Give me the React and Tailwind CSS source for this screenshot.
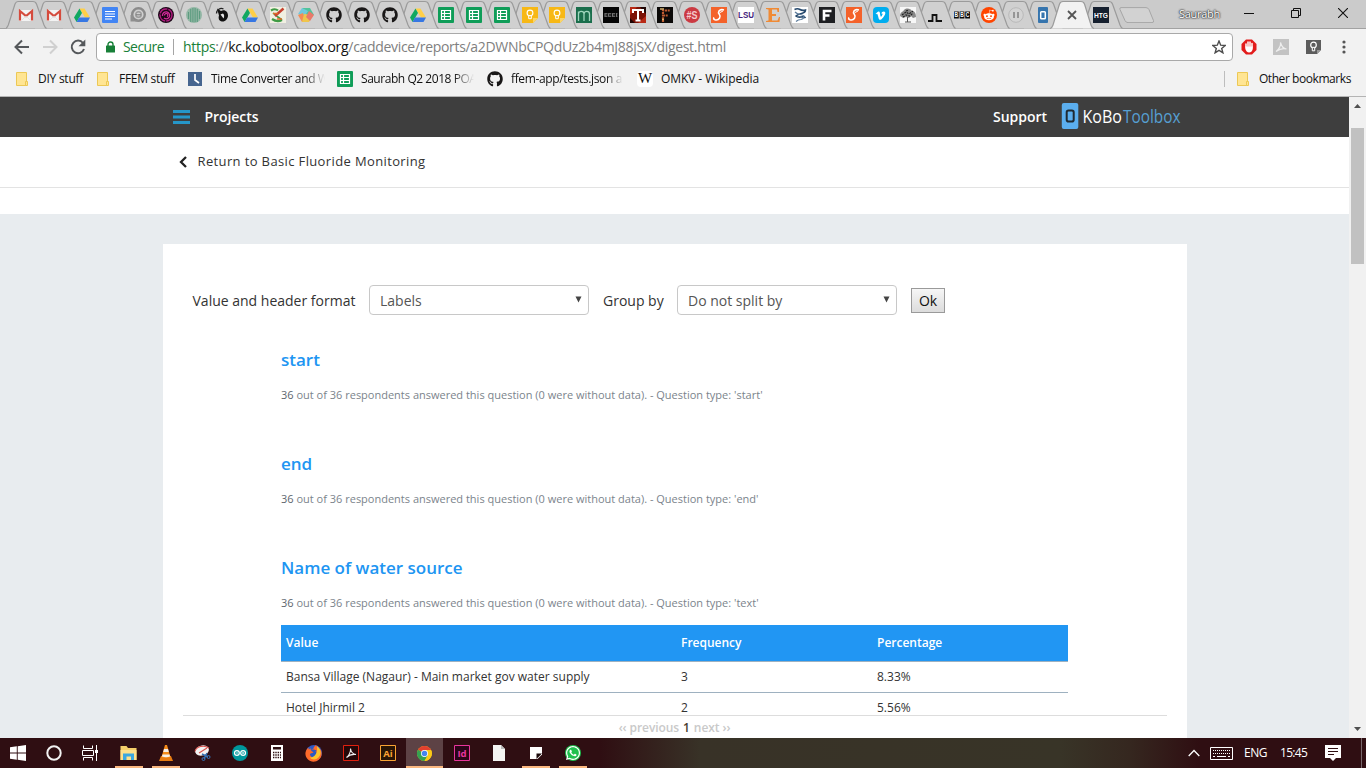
import { FaGithub, FaRedditAlien, FaVimeoV, FaWhatsapp, FaFirefoxBrowser } from "react-icons/fa";

const Svg = ({ children, w = 16, h = 16, vb, className = "" }) => (
  <svg width={w} height={h} viewBox={vb || `0 0 ${w} ${h}`} fill="none" className={`relative block shrink-0 ${className}`}>
    {children}
  </svg>
);

const Gmail = () => (
  <Svg>
    <path d="M1 3h14v11H1z" fill="#f3f3f3" />
    <path d="M2 13.500V4l6 5 6-5v9.500" stroke="#d54b3d" strokeWidth="2.200" />
    <path d="M3.500 13.500 8 9l4.500 4.500" stroke="#ddd" strokeWidth=".8" />
  </Svg>
);
const Drive = () => (
  <Svg>
    <path d="M5.500 1.500h5L16 10.500h-5z" fill="#ffcf48" />
    <path d="M5.500 1.500 8 6 2.600 15 0 10.500z" fill="#11a861" />
    <path d="M5 10.500h11L13.500 15H2.600z" fill="#3777e3" />
  </Svg>
);
const Doc = () => (
  <Svg>
    <rect width="16" height="16" rx="1" fill="#4285f4" />
    <path d="M3 4.500h10M3 7h10M3 9.500h10M3 12h7" stroke="#fff" strokeWidth="1.200" />
  </Svg>
);
const Disc = () => (
  <Svg>
    <circle cx="8.500" cy="7.500" r="6.300" stroke="#8a8a8a" strokeWidth="2.400" />
    <path d="M.5 14.500V8H3v5h6v1.500z" fill="#8f8f8f" />
    <circle cx="8.500" cy="7.500" r="2.800" stroke="#9a9a9a" strokeWidth="1.400" />
    <path d="M6 7.800h5" stroke="#777" />
  </Svg>
);
const Rose = () => (
  <Svg>
    <circle cx="8" cy="8" r="8" fill="#1c0717" />
    <circle cx="8" cy="8" r="6" stroke="#b01c80" strokeWidth="1.400" strokeDasharray="9 1" />
    <path d="M4.500 9a3.600 3.600 0 1 1 6.500 1.500q-2.500 2.500-5 .5" stroke="#d02a98" strokeWidth="1.300" />
    <path d="M6.500 8.500a1.700 1.700 0 1 1 2.500 1.200" stroke="#d02a98" strokeWidth="1.200" />
  </Svg>
);
const GreenDisc = () => (
  <Svg>
    <circle cx="8" cy="8" r="8" fill="#93b7a5" />
    <path d="M2.500 5v7M4.700 2v13M6.900 1v14M9.100 1v14M11.300 2v13M13.500 4v8" stroke="#5d9c80" strokeWidth="1.100" />
  </Svg>
);
const Bird = () => (
  <Svg>
    <path d="M3 1.500 7 4c4-2 7 1 7 4.500S11 15 8 14.500c-3-.5-4-3-3-6z" fill="#111" />
    <path d="M2.500 6.500c0-4 4-6 7-4.500" stroke="#222" strokeWidth="1.300" />
    <path d="M6.500 7.500 9 6.500q2 2 .5 5z" fill="#e6e6e6" />
  </Svg>
);
const Paint = () => (
  <Svg>
    <rect width="16" height="16" fill="#f1f0e2" />
    <path d="M1 3.500q4-2.500 7 0M2 12q5 3.500 10 1" stroke="#3f9b45" strokeWidth="2.200" />
    <path d="m3 6 5 4 4 3" stroke="#3f9b45" strokeWidth="1.600" />
    <path d="m5 9 8.500-7.500" stroke="#c7402f" strokeWidth="2.400" />
    <path d="M3 6.500h5M7 12h5" stroke="#df6d29" strokeWidth="1.300" />
  </Svg>
);
const Hex = () => (
  <Svg>
    <path d="m4 1 8 0 4 7-8 0z" fill="#51c39b" />
    <path d="M0 7 4 1l6 3-4 6z" fill="#72c8dc" />
    <path d="m0 8 5-2 3 9H4z" fill="#f58b54" />
    <path d="m4 15 2-8 9 1-4 7z" fill="#efc64c" />
    <path d="m11 4 5 4-4 6-4-4z" fill="#e9796a" />
  </Svg>
);
const Github = () => <FaGithub className="relative size-4 text-[#191717]" />;
const Sheets = ({ className }) => (
  <Svg className={className}>
    <rect width="16" height="16" rx="1" fill="#0f9d58" />
    <path d="M3.500 3.500h9v9h-9zM3.500 6.500h9M3.500 9.500h9M6.500 3.500v9" stroke="#fff" strokeWidth="1.200" />
  </Svg>
);
const Keep = () => (
  <Svg>
    <path d="M0 0h16v11l-5 5H0z" fill="#f7b816" />
    <path d="M16 11h-5v5z" fill="#fad568" />
    <circle cx="8" cy="6" r="2.900" stroke="#fff" strokeWidth="1.100" />
    <path d="M6.700 8.700h2.600v3H6.700z" stroke="#fff" fill="#f7b816" />
  </Svg>
);
const MTile = () => (
  <Svg>
    <rect width="16" height="16" fill="#1a6e4c" />
    <path d="M2.500 14V4.500M2.500 7c0-3.500 5.500-3.500 5.500 0v7M8 7c0-3.500 5.500-3.500 5.500 0v7" stroke="#9fd6bd" strokeWidth="1.300" />
  </Svg>
);
const BlackTile = () => (
  <Svg>
    <rect width="16" height="16" fill="#050505" />
    <path d="M1.500 6.800h13M1.500 9.200h13" stroke="#8a8a8a" strokeDasharray="3 .8" />
    <path d="M2 6.500v3M5.500 6.500v3M9.500 6.500v3M13.500 6.500v3" stroke="#8a8a8a" strokeWidth=".8" />
  </Svg>
);
const Tile = ({ bg, fg, t, size, y, len }) => (
  <Svg>
    <rect width="16" height="16" fill={bg} />
    <text x="8" y={y} fill={fg} fontSize={size} fontFamily="Liberation Sans" fontWeight="700" textAnchor="middle" textLength={len} lengthAdjust="spacingAndGlyphs">{t}</text>
  </Svg>
);
const TTile = () => (
  <Svg>
    <rect width="16" height="16" fill="#7c1206" />
    <path d="M0 0h7L0 8zM16 9v7H8z" fill="#b92a16" />
    <path d="M10 0h6v7zM0 11v5h5z" fill="#1d0503" />
    <path d="M3 6V3h10v3M8 3v10M5.500 13.500h5" stroke="#fff" strokeWidth="2" />
  </Svg>
);
const FTile = () => (
  <Svg>
    <rect width="16" height="16" fill="#0b0908" />
    <path d="M6 15V3.500h7M6 8.500h5" stroke="#bd5b31" strokeWidth="2.200" strokeDasharray="2 .7" />
    <path d="M3 2h4M5 12.500h2" stroke="#d9b26f" strokeWidth="1.300" />
  </Svg>
);
const HashS = () => (
  <Svg>
    <circle cx="8" cy="8" r="8" fill="#cb3a42" />
    <text x="8" y="12" fontSize="11" fontFamily="Liberation Sans" fontWeight="700" textAnchor="middle" textLength="11" lengthAdjust="spacingAndGlyphs" fill="#f6c9cb">#S</text>
  </Svg>
);
const Swoosh = () => (
  <Svg>
    <rect width="16" height="16" fill="#f4622a" />
    <path d="M13 3q-3.500-1-5 1-1 1.500.3 3.300 1.500 2 .2 4Q7 13.500 4 12.800q-2-.8-1-2.300" stroke="#fff" strokeWidth="1.600" />
    <path d="M9 5.500 12 4" stroke="#fff" />
  </Svg>
);
const EMark = () => (
  <Svg>
    <path d="M1 1h13v4h-1.500L12 2.500H7V7h4v2H7v4.500h5.500L14 10h1l-.5 5H1v-1l2.500-.5v-11L1 2z" fill="#f08a34" />
  </Svg>
);
const Twist = () => (
  <Svg>
    <rect width="16" height="16" fill="#fff" />
    <path d="M2.500 2.500q3-1.500 5.500 0t5.500.5q0 2.500-4 3.500T4 9q1.500 1.500 5 1t4.500 1" stroke="#25486c" strokeWidth="1.600" />
    <path d="M3 5q2 2 5 2.500t4 1.500q0 3-3 3.500-3 0-5 2" stroke="#5d7c9c" strokeWidth="1.200" />
  </Svg>
);
const FBlack = () => (
  <Svg>
    <rect width="16" height="16" fill="#1e1f22" />
    <path d="M5 13.500V4h7.500M5 8.500h5.500" stroke="#fff" strokeWidth="2.600" />
  </Svg>
);
const Vimeo = () => (
  <span className="relative flex size-4 items-center justify-center rounded-sm bg-[#00adef]">
    <FaVimeoV className="size-[11px] text-white" />
  </span>
);
const Tree = () => (
  <Svg>
    <rect width="16" height="16" fill="#f7f7f7" />
    <path d="M0 9c0-4 3-4 4-6 3-3 7-1 8 1 3 0 4 3 4 6l-3 1-2-2-2 2-3-1-3 1z" fill="#888" />
    <path d="M2 8l4-3 3 2 4-3M3 10l3-2 4 1 3-3M6 4l3-1" stroke="#222" strokeWidth="1.200" strokeDasharray="2 1" />
    <path d="M7.500 10v5M5 15h6" stroke="#555" />
  </Svg>
);
const Pulse = () => (
  <Svg>
    <path d="M1 14h4.500V8h4v6H15" stroke="#111" strokeWidth="1.800" />
  </Svg>
);
const Bbc = () => (
  <Svg>
    <path d="M0 4.500h4.800v7H0zM5.600 4.500h4.800v7H5.600zM11.200 4.500H16v7h-4.800z" fill="#0a0a0a" />
    {["B", "B", "C"].map((c, i) => (
      <text key={i} x={2.4 + i * 5.6} y="10.300" fontSize="6.500" fontFamily="Liberation Sans" fontWeight="700" textAnchor="middle" textLength="3.600" lengthAdjust="spacingAndGlyphs" fill="#fff">{c}</text>
    ))}
  </Svg>
);
const Reddit = () => (
  <span className="relative flex size-4 items-center justify-center rounded-full bg-[#ff4500]">
    <FaRedditAlien className="size-3 text-white" />
  </span>
);
const Pause = () => (
  <Svg>
    <circle cx="8" cy="8" r="7.300" fill="#d4d4d4" stroke="#b9b9b9" />
    <path d="M6 5v6M10 5v6" stroke="#909090" strokeWidth="1.800" />
  </Svg>
);
const KoboTab = () => (
  <Svg>
    <rect x="3" width="10" height="16" rx="1" fill="#3675ae" />
    <rect x="5.700" y="4.700" width="4.600" height="7" rx=".8" fill="#3675ae" stroke="#fff" strokeWidth="1.500" />
  </Svg>
);

const TABS = [
  Gmail, Gmail, Drive, Doc, Disc, Rose, GreenDisc, Bird, Drive, Paint, Hex, Github, Github, Github, Drive,
  Sheets, Sheets, Sheets, Keep, Keep, MTile, BlackTile, TTile, FTile, HashS, Swoosh,
  () => <Tile bg="#fff" fg="#461d7c" t="LSU" size={8.5} y={10.5} len={16} />,
  EMark, Twist, FBlack, Swoosh, Vimeo, Tree, Pulse, Bbc, Reddit, Pause, KoboTab,
];

const TabShape = ({ active }) => (
  <svg width="44" height="29" viewBox="0 0 44 29" fill="none" className="absolute -left-1.5 top-0">
    <path
      d={active ? "M0 28.500Q2 28 3 25L9.500 4Q10.500 1.500 13 1.500H31Q33.500 1.500 34.500 4L41 25Q42 28 44 28.500" : "M0 28.500Q1.500 27 2.300 25L9 4Q10 1.500 12 1.500H27Q29.500 1.500 30.500 4L38 25Q39 27.500 40.500 28.500"}
      fill={active ? "#f2f2f2" : "#d0d0d0"}
      stroke="#9b9b9b"
      strokeWidth="1.200"
    />
  </svg>
);

function TabStrip() {
  return (
    <div className="flex h-[29px] items-stretch border-b border-[#a2a2a2] bg-[#cbcbcb] pl-3">
      {TABS.map((Icon, i) => (
        <div
          key={i}
          className={`relative flex shrink-0 items-center justify-center pt-0.5 ${i < 18 ? "w-7" : "w-[27px]"}`}
          style={{ zIndex: TABS.length - i }}
        >
          <TabShape />
          <Icon />
        </div>
      ))}
      <div className="relative z-50 flex w-8 shrink-0 items-center justify-center pt-0.5">
        <TabShape active />
        <Svg w={10} h={10}><path d="m1 1 8 8M9 1 1 9" stroke="#555" strokeWidth="1.800" /></Svg>
      </div>
      <div className="relative z-0 flex w-[25px] shrink-0 items-center justify-center pt-0.5">
        <TabShape />
        <Tile bg="#16202f" fg="#fff" t="HTG" size={8} y={11} len={14} />
      </div>
      <Svg w={36} h={16} className="ml-1.5 mt-[7px]">
        <path d="M2 .6h25q2 0 3 2l4.500 11q.6 2-1.500 2H9q-2 0-3-2L1 2.500Q.4.600 2 .6z" fill="#d2d2d2" stroke="#a6a6a6" />
      </Svg>
      <span className="ml-[24px] self-center text-[11px] tracking-[-0.28px] text-white [text-shadow:0_0_2px_#333,0_0_2px_#333,0_0_1px_#222]">Saurabh</span>
      <div className="ml-auto mr-[18px] flex items-center gap-[37px] pb-0.5">
        <Svg w={10} h={10}><path d="M0 5.500h10" stroke="#111" /></Svg>
        <Svg w={10} h={10}><path d="M.5 2.500h7v7h-7zM2.500 2V.500h7v7H8" stroke="#111" /></Svg>
        <Svg w={10} h={10}><path d="m0 0 10 10M10 0 0 10" stroke="#111" strokeWidth="1.100" /></Svg>
      </div>
    </div>
  );
}

function Toolbar() {
  return (
    <div className="flex h-9 items-center pl-[14px] pr-[19px]">
      <Svg w={16} h={16}><path d="M15 8H2M8 1.500 1.500 8 8 14.500" stroke="#55585b" strokeWidth="2" /></Svg>
      <Svg w={16} h={16} className="ml-3"><path d="M1 8h13M8 1.500 14.500 8 8 14.500" stroke="#d0d0d0" strokeWidth="2" /></Svg>
      <Svg w={16} h={16} className="ml-3">
        <path d="M13 4A6.300 6.300 0 1 0 14 10" stroke="#55585b" strokeWidth="2" />
        <path d="M15.300.500v6.800H8.500z" fill="#55585b" />
      </Svg>
      <div className="ml-[10px] flex h-7 flex-1 items-center rounded-sm border border-[#a9a9a9] bg-white pl-[9px] pr-[6px] text-sm">
        <Svg w={9} h={12}>
          <path d="M2 5V3.500a2.500 2.500 0 0 1 5 0V5" stroke="#188038" strokeWidth="1.400" />
          <rect y="4.500" width="9" height="7" rx=".6" fill="#188038" />
        </Svg>
        <span className="ml-2 w-[50px] tracking-[-0.57px] text-[#188038]">Secure</span>
        <span className="h-4 w-px bg-[#a5a5a5]" />
        <span className="ml-[9px] whitespace-nowrap tracking-[-0.31px] text-[#808080]">
          <span className="text-[#188038]">https</span>://<span className="text-[#111]">kc.kobotoolbox.org</span>/caddevice/reports/a2DWNbCPQdUz2b4mJ88jSX/digest.html
        </span>
        <Svg w={14} h={14} className="ml-auto">
          <path d="m7 1 1.700 4.200 4.500.3-3.500 2.900 1.200 4.400L7 10.400l-3.900 2.400 1.200-4.400L.8 5.500l4.500-.3z" stroke="#4d4d4d" strokeWidth="1.400" />
        </Svg>
      </div>
      <div className="ml-2 flex items-center">
        <Svg w={16} h={16}>
          <path d="M5 .5h6L15.500 5v6L11 15.500H5L.5 11V5z" fill="#e21b1b" />
          <path d="M5 8V5M7 7.500V3M9 7.500V3M11 8V4.500" stroke="#fff" strokeWidth="1.500" strokeLinecap="round" />
          <path d="M4.300 7.500h7.500v2.500q-1 3.500-3.800 3.500-2.300 0-3.700-3.500z" fill="#fff" />
        </Svg>
        <Svg w={16} h={16} className="ml-4">
          <rect width="16" height="16" fill="#c3c3c3" />
          <path d="M3 12.500C6 11 8 6 7.500 3.500c1 4 3 6 6 6.500-4-1-7 0-10.500 2.500z" stroke="#eee" strokeWidth="1.200" />
        </Svg>
        <Svg w={15} h={16} className="ml-[17px]">
          <path d="M0 1h15v10l-4 4H0z" fill="#5c5c5c" />
          <path d="M15 11h-4v4z" fill="#999" />
          <circle cx="7.500" cy="6" r="2.800" stroke="#fff" strokeWidth="1.200" />
          <path d="M6.300 8.300h2.400v3.500H6.300z" stroke="#fff" fill="#5c5c5c" />
        </Svg>
        <Svg w={4} h={16} className="ml-[21px] mr-px">
          <circle cx="2" cy="3" r="1.600" fill="#555" /><circle cx="2" cy="8" r="1.600" fill="#555" /><circle cx="2" cy="13" r="1.600" fill="#555" />
        </Svg>
      </div>
    </div>
  );
}

const Folder = () => (
  <Svg w={12} h={14}>
    <path d="M.5.5h10v13H.5z" fill="#ffe593" stroke="#ecc855" />
    <path d="M9.500 9.500h2v4h-2z" fill="#ffe593" stroke="#ecc855" />
  </Svg>
);

function Bookmarks() {
  return (
    <div className="flex h-[31px] items-center whitespace-nowrap pb-1 pl-4 pr-[15px] text-xs text-[#111]">
      <Folder />
      <span className="ml-[10px] w-[49px] tracking-[-0.25px]">DIY stuff</span>
      <span className="ml-[10px]"><Folder /></span>
      <span className="ml-[10px] w-[59px] tracking-[-0.28px]">FFEM stuff</span>
      <Svg w={14} h={14} className="ml-[10px]">
        <rect width="14" height="14" fill="#46658f" />
        <path d="M7 2v6l4 3" stroke="#fff" strokeWidth="1.700" />
      </Svg>
      <span className="ml-[9px] w-[114px] overflow-hidden tracking-[-0.37px] [mask-image:linear-gradient(to_right,#000_82%,transparent)]">Time Converter and W</span>
      <Sheets className="ml-[12px]" />
      <span className="ml-2 w-[113px] overflow-hidden tracking-[-0.45px] [mask-image:linear-gradient(to_right,#000_82%,transparent)]">Saurabh Q2 2018 POA</span>
      <span className="ml-[13px]"><Github /></span>
      <span className="ml-2 w-[112px] overflow-hidden tracking-[-0.36px] [mask-image:linear-gradient(to_right,#000_85%,transparent)]">ffem-app/tests.json a</span>
      <span className="ml-[14px] flex size-4 items-center justify-center rounded-sm bg-white font-['Liberation_Serif',serif] text-[15px]">W</span>
      <span className="ml-2 tracking-[-0.08px]">OMKV - Wikipedia</span>
      <span className="ml-auto mr-3 h-4 w-px bg-[#bdbdbd]" />
      <Folder />
      <span className="ml-[10px] tracking-[-0.43px]">Other bookmarks</span>
    </div>
  );
}

function SiteHeader() {
  return (
    <header className="h-10 bg-[#3e3e3e]">
      <div className="ml-[163px] flex h-full w-[1024px] items-center pl-[10px] pr-[5px] text-sm font-semibold text-white">
        <Svg w={17} h={14}>
          <path d="M0 1.500h17M0 7h17M0 12.500h17" stroke="#2596c8" strokeWidth="3" />
        </Svg>
        <span className="ml-[14.500px] tracking-[-0.06px]">Projects</span>
        <span className="ml-auto tracking-[-0.02px]">Support</span>
        <Svg w={121} h={28} className="ml-[14px]">
          <rect x=".8" y="0" width="16.500" height="26" rx="2" fill="#5baeee" />
          <rect x="5.700" y="7.500" width="7" height="11" rx="1.800" fill="#5baeee" stroke="#1f2a33" strokeWidth="2" />
          <text x="21.500" y="19.700" fontFamily="Open Sans" fontWeight="400" fontSize="17.500" fill="#fff" textLength="39.500" lengthAdjust="spacingAndGlyphs">KoBo</text>
          <text x="62" y="19.700" fontFamily="Open Sans" fontWeight="400" fontSize="17.500" fill="#569fd2" textLength="57.500" lengthAdjust="spacingAndGlyphs">Toolbox</text>
        </Svg>
      </div>
    </header>
  );
}

const Select = ({ children }) => (
  <div className="flex h-[30px] w-[220px] items-center justify-between rounded-[4px] border border-[#c8c8c8] bg-white pl-[10px] pr-[6px] text-[#555]">
    <span className="pt-0.5">{children}</span>
    <Svg w={7} h={7} className="-mt-0.5"><path d="M.5.5h6L3.500 6.500z" fill="#444" /></Svg>
  </div>
);

const Question = ({ name, type }) => (
  <div className="h-[104px]">
    <h3 className="text-[17px] font-semibold leading-6 text-[#2095f2]">{name}</h3>
    <p className="mt-[14px] text-[11px] leading-[18px] text-[#7b848c]">
      <span className="text-[#5d666e]">36</span> out of 36 respondents answered this question (0 were without data). - Question type: '{type}'
    </p>
  </div>
);

const ROWS = [
  ["Bansa Village (Nagaur) - Main market gov water supply", "3", "8.33%"],
  ["Hotel Jhirmil 2", "2", "5.56%"],
];

function Report() {
  return (
    <main className="ml-[163px] flex h-[494px] w-[1024px] flex-col bg-white px-5">
      <div className="h-[471px] overflow-hidden">
        <div className="mt-[41px] flex items-center pl-[9.500px] text-sm text-[#333]">
          <span className="w-[176.500px] pt-0.5">Value and header format</span>
          <Select>Labels</Select>
          <span className="ml-[14px] w-[74px] pt-0.5">Group by</span>
          <Select>Do not split by</Select>
          <button className="ml-[14px] h-[25px] w-[34px] border border-[#9a9a9a] bg-linear-to-b from-[#f6f6f6] to-[#dcdcdc] pt-0.5 leading-none text-[#111]">Ok</button>
        </div>
        <div className="ml-[98px] mt-[33px] w-[787px]">
          <Question name="start" type="start" />
          <Question name="end" type="end" />
          <Question name="Name of water source" type="text" />
          <table className="-mt-[35px] w-full table-fixed border-separate border-spacing-0 text-left text-xs text-[#333]">
            <colgroup><col className="w-[395px]" /><col className="w-[196px]" /><col /></colgroup>
            <thead>
              <tr className="h-[37px] bg-[#2196f3] text-white">
                {["Value", "Frequency", "Percentage"].map((c) => (
                  <th key={c} className="border-b border-[#9eb1c0] px-[5px] py-0 font-semibold">{c}</th>
                ))}
              </tr>
            </thead>
            <tbody>
              {ROWS.map((r) => (
                <tr key={r[0]} className="h-[31px]">
                  {r.map((c) => <td key={c} className="border-b border-[#9eb1c0] px-[5px] py-0">{c}</td>)}
                </tr>
              ))}
            </tbody>
          </table>
        </div>
      </div>
      <div className="flex flex-1 items-center justify-center gap-1 border-t border-[#ddd] pb-px pr-px pt-0.5 text-xs font-semibold tracking-[-0.08px] text-[#c9c9c9]">
        <span>‹‹ previous</span>
        <span className="text-[#4a3b30]">1</span>
        <span>next ››</span>
      </div>
    </main>
  );
}

const Explorer = () => (
  <Svg w={17} h={16}>
    <path d="M.5 1h6l1.500 2h8.500v12H.5z" fill="#f5cf6b" />
    <path d="M.5 5h16v10H.5z" fill="#fde08c" />
    <path d="M3 15V8.500h11V15h-3v-3.500H6.500V15z" fill="#3ba7e0" />
  </Svg>
);
const Vlc = () => (
  <Svg w={16} h={17}>
    <path d="M3 11h10l2 5H1z" fill="#e87c12" />
    <path d="M7 0h2l3.500 12q-4.500 2-9 0z" fill="#f48b1a" />
    <path d="M6 4h4l.8 3H5.200zM4.500 9.500h7l.6 2q-4 1.500-8.200 0z" fill="#f4f0ea" />
  </Svg>
);
const Snip = () => (
  <Svg w={17} h={16}>
    <ellipse cx="8" cy="5.500" rx="7" ry="5" fill="#f3f3f3" transform="rotate(-15 8 5.500)" />
    <path d="M1 6.500c1-5 9-7 14-3.500M5 8l8-5" stroke="#d8524c" strokeWidth="1.100" />
    <path d="m8 9 6 3M13 8l-3 6" stroke="#3472b5" strokeWidth="1.500" />
    <circle cx="14.500" cy="12" r="1.500" stroke="#3472b5" /><circle cx="9.500" cy="14" r="1.500" stroke="#3472b5" />
  </Svg>
);
const Arduino = () => (
  <Svg>
    <circle cx="8" cy="8" r="8" fill="#00979c" />
    <circle cx="4.900" cy="8" r="2.400" stroke="#fff" strokeWidth="1.200" /><circle cx="11.100" cy="8" r="2.400" stroke="#fff" strokeWidth="1.200" />
    <path d="M4 8h2M10 8h2.200M11.100 7v2" stroke="#fff" strokeWidth=".7" />
  </Svg>
);
const Calc = () => (
  <Svg w={12} h={16}>
    <rect width="12" height="16" fill="#fff" />
    <path d="M2 2h8v2.500H2z" fill="#2e1013" />
    <path d="M2 7.500h8M2 10h8M2 12.500h8" stroke="#2e1013" strokeWidth="1.300" strokeDasharray="1.400 .9" />
  </Svg>
);
const Firefox = () => (
  <span className="relative flex size-4 items-center justify-center rounded-full bg-[#2f59c4]">
    <FaFirefoxBrowser className="absolute size-[17px] text-[#ff6a2a]" />
    <Svg className="absolute"><path d="M11 1c4 3 5 8 1.500 11.500C10 15 6 15 3.500 12.500 9 13 12 7.500 11 1z" fill="#ffc42c" /></Svg>
  </span>
);
const Acrobat = () => (
  <Svg>
    <path d="M.5.5h15v15H.5z" fill="#240708" stroke="#e0200f" />
    <path d="M3.500 12.500C6 11 8 6 7.500 3.500c.5 4 2.500 5.500 5.500 6-4-.5-6.500 0-9.500 3z" stroke="#eee" strokeWidth="1.100" />
  </Svg>
);
const Adobe = ({ t, c, bg }) => (
  <Svg>
    <path d="M.5.5h15v15H.5z" fill={bg} stroke={c} />
    <text x="8" y="11.500" fontSize="9.500" fontWeight="700" fontFamily="Open Sans" fill={c} textAnchor="middle">{t}</text>
  </Svg>
);
const Chrome = () => (
  <Svg w={15} h={15} vb="0 0 16 16">
    <circle cx="8" cy="8" r="8" fill="#fbc916" />
    <path d="M8 8 1.070 4A8 8 0 0 1 14.930 4z" fill="#e2402f" />
    <path d="M8 8 1.070 4A8 8 0 0 0 8 16l3.500-6z" fill="#35a251" />
    <path d="M8 4.300h6.930A8 8 0 0 1 8 16l3.300-6z" fill="#fbc916" />
    <circle cx="8" cy="8" r="3.700" fill="#fff" /><circle cx="8" cy="8" r="2.900" fill="#4484f0" />
  </Svg>
);
const Paper = () => (
  <Svg w={12} h={16}>
    <path d="M0 0h8l4 4v12H0z" fill="#f5f5f3" /><path d="M8 0v4h4z" fill="#bbb" />
  </Svg>
);
const Sticky = () => (
  <Svg w={12} h={12}>
    <path d="M0 0h12v7.500L7.500 12H0z" fill="#fff" /><path d="M6.500 6.500H12L6.500 12z" fill="#1b090a" />
  </Svg>
);
const Whats = () => (
  <span className="relative flex size-4 items-center justify-center rounded-full bg-[#1fc04d]">
    <FaWhatsapp className="size-4 text-white" />
  </span>
);

const TASKS = [
  [Explorer, "open"], [Vlc, "open"], [Snip], [Arduino], [Calc], [Firefox], [Acrobat],
  [() => <Adobe t="Ai" c="#f9a334" bg="#291505" />], [Chrome, "active"],
  [() => <Adobe t="Id" c="#e8359b" bg="#2b0519" />], [Paper], [Sticky, "open"], [Whats, "open"],
];

function Taskbar() {
  return (
    <footer className="flex h-[30px] items-stretch bg-[linear-gradient(to_right,#2f0e12_0,#2f0e12_600px,#383227_700px,#383427_1060px,#35271f_1130px,#2f0e12_1200px)] text-xs text-white">
      <div className="flex w-9 items-center justify-center">
        <Svg><path d="M0 2.300 6.800 1.300v6.300H0zM7.700 1.200 16 0v7.600H7.700zM0 8.500h6.800v6.300L0 13.800zM7.700 8.500H16V16l-8.300-1.200z" fill="#fff" /></Svg>
      </div>
      <div className="flex w-9 items-center justify-center">
        <Svg><circle cx="8" cy="8" r="6.700" stroke="#f2f2f2" strokeWidth="2" /></Svg>
      </div>
      <div className="mr-[2px] flex w-9 items-center justify-center">
        <Svg><path d="M1.500.500v3h9v-3M1.500 15.500v-3h9v3M.5 5.500h11v5H.5zM14.500 0v16" stroke="#fff" /><path d="M13 5h3v3h-3z" fill="#fff" /></Svg>
      </div>
      {TASKS.map(([Icon, state], i) => (
        <div key={i} className={`relative flex w-[37px] shrink-0 items-center justify-center ${state === "active" ? "bg-[#5d4245]" : ""}`}>
          <Icon />
          {state && <span className={`absolute bottom-0 h-0.5 bg-[#fbb880] ${state === "active" ? "w-full" : "w-7"}`} />}
        </div>
      ))}
      <div className="ml-auto mr-1 flex items-center border-r border-[#77666a] pr-5">
        <Svg w={12} h={8}><path d="m.7 7 5.300-5.500L11.300 7" stroke="#fff" strokeWidth="1.300" /></Svg>
        <Svg w={23} h={13} className="ml-[10px]">
          <path d="M.5.5h22v12H.5z" stroke="#fff" />
          <path d="M3 3.500h17M3 6.500h17" stroke="#fff" strokeDasharray="1 1" /><path d="M3 9.500h2M7 9.500h9M18 9.500h2" stroke="#fff" />
        </Svg>
        <span className="ml-[11px] w-9 tracking-[-0.45px]">ENG</span>
        <span className="w-[45px] tracking-[-0.7px]">15:45</span>
        <Svg w={16} h={16}>
          <path d="M0 0h16v13h-5l-3 3-3-3H0z" fill="#fff" /><path d="M3 3.500h10M3 6.500h10M3 9.500h6" stroke="#2f0e12" />
        </Svg>
      </div>
    </footer>
  );
}

export default function App() {
  return (
    <div className="flex h-[768px] w-[1366px] flex-col overflow-hidden bg-[#f2f2f2] font-['Open_Sans',sans-serif]">
      <div className="relative z-10 h-[97px] border-b border-[#b4b4b4] bg-[#f2f2f2]">
        <TabStrip />
        <Toolbar />
        <Bookmarks />
      </div>
      <div className="flex h-[641px]">
        <div className="w-[1349px] overflow-hidden bg-[#e8ecef]">
          <SiteHeader />
          <div className="h-[77px] bg-white">
            <div className="flex h-[51px] items-center border-b border-[#e3e3e3] pb-px pl-[179px] text-[13px] text-[#333]">
              <Svg w={8} h={12}><path d="M7 1 2 6l5 5" stroke="#222" strokeWidth="2.300" /></Svg>
              <span className="ml-[10.500px] font-medium tracking-[0.37px]">Return to Basic Fluoride Monitoring</span>
            </div>
          </div>
          <div className="pt-[30px]"><Report /></div>
        </div>
        <div className="flex w-[17px] flex-col items-center justify-between bg-[#f1f1f1] py-[7px]">
          <Svg w={7} h={4}><path d="M0 4h7L3.500 0z" fill="#505050" /></Svg>
          <div className="mb-auto mt-5 h-[136px] w-[13px] bg-[#c1c1c1]" />
          <Svg w={7} h={4}><path d="M0 0h7L3.500 4z" fill="#505050" /></Svg>
        </div>
      </div>
      <Taskbar />
    </div>
  );
}
